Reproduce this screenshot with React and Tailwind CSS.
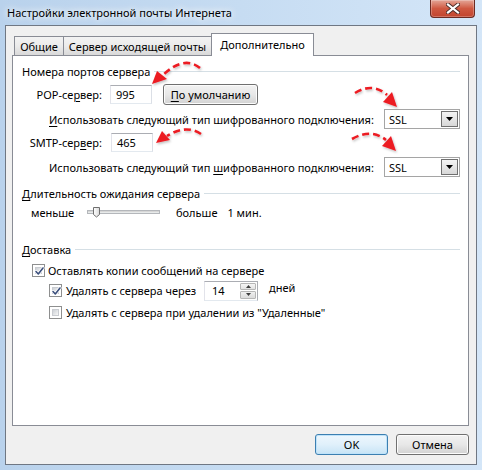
import React from "react";

function U({ children }) {
  return <span className="underline decoration-1 underline-offset-[2px]">{children}</span>;
}

function GroupHeader({ children }) {
  return (
    <div className="flex h-[16px] items-center">
      <span className="whitespace-nowrap">{children}</span>
      <div className="ml-[4px] h-px flex-1 bg-[#d5dfe5]" />
    </div>
  );
}

function TextBox({ value, className = "" }) {
  return (
    <div className={"flex h-[19px] w-[42px] items-center border border-[#abadb3] border-l-[#e2e3ea] border-r-[#dbdfe6] border-b-[#e3e9ef] bg-white pl-[5px] " + className}>
      {value}
    </div>
  );
}

function Select() {
  return (
    <div className="ml-auto flex h-[20px] w-[76px] items-center border border-[#a5a5a5] bg-white pl-[4px] pr-[1px]">
      <span className="flex-1">SSL</span>
      <div className="flex h-[16px] w-[17px] items-center justify-center border border-[#707070] bg-gradient-to-b from-[#f4f4f4] to-[#d8d8d8]">
        <svg width="7" height="4" viewBox="0 0 7 4">
          <polygon points="0,0 7,0 3.5,4" fill="#000" />
        </svg>
      </div>
    </div>
  );
}

function Checkbox({ checked }) {
  return (
    <div className="relative h-[13px] w-[13px] shrink-0 border border-[#8e8f8f] bg-white p-[2px]">
      <div className="h-full w-full border border-[#c9ccd1] bg-gradient-to-br from-[#cdd1d6] to-[#f7f7f7]" />
      {checked && (
        <svg className="absolute left-[1px] top-[1px]" width="11" height="11" viewBox="0 0 11 11">
          <path d="M2 5.5 L4.3 8 L9 2" fill="none" stroke="#fff" strokeWidth="3" strokeLinecap="round" strokeLinejoin="round" />
          <path d="M2 5.5 L4.3 8 L9 2" fill="none" stroke="#3b4f7c" strokeWidth="1.6" strokeLinecap="round" strokeLinejoin="round" />
        </svg>
      )}
    </div>
  );
}

function Spinner() {
  return (
    <div className="flex h-[20px] w-[54px] shrink-0 border border-[#abadb3] border-b-[#e3e9ef] border-l-[#e2e3ea] bg-white">
      <div className="flex flex-1 items-center pl-[7px]">14</div>
      <div className="my-[1px] mr-[1px] flex w-[16px] flex-col gap-px">
        <div className="flex flex-1 items-center justify-center rounded-[1px] border border-[#b6b6b6] bg-gradient-to-b from-[#f6f6f6] to-[#e2e2e2]">
          <svg width="5" height="3" viewBox="0 0 5 3"><polygon points="2.5,0 5,3 0,3" fill="#3d3d3d" /></svg>
        </div>
        <div className="flex flex-1 items-center justify-center rounded-[1px] border border-[#b6b6b6] bg-gradient-to-b from-[#f0f0f0] to-[#dcdcdc]">
          <svg width="5" height="3" viewBox="0 0 5 3"><polygon points="0,0 5,0 2.5,3" fill="#3d3d3d" /></svg>
        </div>
      </div>
    </div>
  );
}

function Slider() {
  return (
    <svg width="73" height="16" viewBox="0 0 73 16" className="shrink-0">
      <rect x="0.5" y="6.5" width="72" height="3" fill="#e7eaea" stroke="#b4b7bb" />
      <line x1="1" y1="7.5" x2="72" y2="7.5" stroke="#d6d6d6" />
      <defs>
        <linearGradient id="thumb" x1="0" y1="0" x2="1" y2="0">
          <stop offset="0" stopColor="#ffffff" />
          <stop offset="1" stopColor="#d9d9d9" />
        </linearGradient>
      </defs>
      <path d="M6.5 3.5 H12.5 V10.5 L9.5 13 L6.5 10.5 Z" fill="url(#thumb)" stroke="#6f6f6f" />
    </svg>
  );
}

function Arrows() {
  const dash = "7 4";
  return (
    <svg className="pointer-events-none absolute left-0 top-0" width="482" height="470" viewBox="0 0 482 470">
      <defs>
        <filter id="sh" x="-20%" y="-20%" width="140%" height="140%">
          <feDropShadow dx="1" dy="1.5" stdDeviation="1.2" floodColor="#000" floodOpacity="0.25" />
        </filter>
      </defs>
      <g filter="url(#sh)" stroke="#ec1c24" fill="none" strokeWidth="2.6">
        <path d="M200 68 Q184 55 163 75" strokeDasharray={dash} />
        <path d="M201 134 Q186 124 167 136" strokeDasharray={dash} />
        <path d="M355 93 Q373 82 387 95" strokeDasharray={dash} />
        <path d="M352 139 Q371 128 386 140" strokeDasharray={dash} />
      </g>
      <g filter="url(#sh)" fill="#ec1c24">
        <polygon points="152,84 157,71 167,79" />
        <polygon points="156,143 162,131 170,140" />
        <polygon points="397,107 383,102 392,92" />
        <polygon points="396,151 382,146 391,136" />
      </g>
    </svg>
  );
}

function CloseButton() {
  return (
    <div className="flex h-[18px] w-[45px] items-center justify-center rounded-b-[4px] border border-t-0 border-[#6b2a22] bg-gradient-to-b from-[#e3a597] via-[#cf5841] to-[#c1442e] shadow-[inset_0_0_0_1px_rgba(255,255,255,0.25)]">
      <svg width="14" height="11" viewBox="0 0 14 11">
        <path d="M2 1.5 L12 9.5 M12 1.5 L2 9.5" stroke="#4a2b28" strokeWidth="4" strokeLinecap="square" />
        <path d="M2 1.5 L12 9.5 M12 1.5 L2 9.5" stroke="#ffffff" strokeWidth="2.2" strokeLinecap="square" />
      </svg>
    </div>
  );
}

export default function App() {
  return (
    <div className="relative h-[470px] w-[482px] overflow-hidden whitespace-nowrap bg-gradient-to-r from-[#b9d2ec] via-[#c6dcf2] to-[#d4e6f8] font-['Noto_Sans',sans-serif] text-[11px] leading-none text-black">
      <div className="flex h-[25px] items-start justify-between pl-[7px] pr-[7px]">
        <div className="mt-[7px] text-[11px] [text-shadow:0_0_6px_#fff,0_0_10px_#fff]">
          Настройки электронной почты Интернета
        </div>
        <CloseButton />
      </div>

      <div className="mx-[5px] h-[440px] border border-[#6f7783] bg-[#f0f0f0] pt-[7px]">
        <div className="ml-[6px] w-[457px]">
          <div className="flex h-[22px] items-end pl-[2px]">
            <div className="flex h-[19px] w-[50px] items-center justify-center border border-b-0 border-[#898c95] bg-gradient-to-b from-[#f3f3f3] via-[#ebebeb] to-[#d9d9d9]">
              Общие
            </div>
            <div className="-ml-px flex h-[19px] w-[149px] items-center justify-center border border-b-0 border-[#898c95] bg-gradient-to-b from-[#f3f3f3] via-[#ebebeb] to-[#d9d9d9]">
              Сервер исходящей почты
            </div>
            <div className="relative z-10 -mb-px -ml-px flex h-[23px] w-[103px] items-center justify-center border border-b-0 border-[#898c95] bg-white pb-[1px]">
              Дополнительно
            </div>
          </div>

          <div className="h-[371px] border border-[#898c95] bg-white pl-[9px] pr-[8px] pt-[7px]">
            <GroupHeader>Номера портов сервера</GroupHeader>

            <div className="mt-[5px] flex h-[21px] items-center">
              <div className="w-[80px] text-right">
                POP-се<U>р</U>вер:
              </div>
              <TextBox value="995" className="ml-[8px]" />
              <div className="ml-[11px] flex h-[21px] w-[95px] items-center justify-center rounded-[3px] border border-[#707070] bg-gradient-to-b from-[#f2f2f2] via-[#e8e8e8] to-[#d2d2d2] shadow-[inset_0_0_0_1px_#fcfcfc]">
                <U>П</U>о умолчанию
              </div>
            </div>

            <div className="mt-[4px] flex h-[20px] items-center pl-[27px]">
              <span>
                <U>И</U>спользовать следующий тип шифрованного подключения:
              </span>
              <Select />
            </div>

            <div className="mt-[4px] flex h-[19px] items-center">
              <div className="w-[80px] text-right">
                SMTP-сер<U>в</U>ер:
              </div>
              <TextBox value="465" className="ml-[9px] border-[#7eb4ea] border-l-[#c5daed] border-r-[#c5daed] border-b-[#d5e6f5]" />
            </div>

            <div className="mt-[5px] flex h-[20px] items-center pl-[27px]">
              <span>
                Использовать следующий тип <U>ш</U>ифрованного подключения:
              </span>
              <Select />
            </div>

            <div className="mt-[8px]">
              <GroupHeader>
                <U>Д</U>лительность ожидания сервера
              </GroupHeader>
            </div>

            <div className="mt-[3px] flex h-[16px] items-center pl-[9px]">
              <div className="w-[56px]">меньше</div>
              <Slider />
              <div className="ml-[16px]">больше</div>
              <div className="ml-[10px]">1 мин.</div>
            </div>

            <div className="mt-[21px]">
              <GroupHeader>
                <U>Д</U>оставка
              </GroupHeader>
            </div>

            <div className="mt-[5px] flex h-[16px] items-center pl-[10px]">
              <Checkbox checked />
              <span className="ml-[3px]">Оставлять копии сообщений на сервере</span>
            </div>

            <div className="mt-[2px] flex h-[21px] items-center pl-[27px]">
              <Checkbox checked />
              <span className="ml-[4px] w-[138px]">Удалять с сервера через</span>
              <Spinner />
              <span className="ml-[11px] -mt-[6px]">дней</span>
            </div>

            <div className="mt-[3px] flex h-[16px] items-center pl-[27px]">
              <Checkbox />
              <span className="ml-[4px]">Удалять с сервера при удалении из "Удаленные"</span>
            </div>
          </div>
        </div>

        <div className="mt-[8px] flex justify-end gap-[8px] pr-[7px]">
          <div className="flex h-[21px] w-[73px] items-center justify-center rounded-[3px] border border-[#3c7fb1] bg-gradient-to-b from-[#eef7fd] via-[#e0f0fb] to-[#c7e4f6] shadow-[inset_0_0_0_1px_#bfe3fa]">
            OK
          </div>
          <div className="flex h-[21px] w-[73px] items-center justify-center rounded-[3px] border border-[#707070] bg-gradient-to-b from-[#f2f2f2] via-[#e8e8e8] to-[#d2d2d2] shadow-[inset_0_0_0_1px_#fcfcfc]">
            Отмена
          </div>
        </div>
      </div>

      <Arrows />
    </div>
  );
}
